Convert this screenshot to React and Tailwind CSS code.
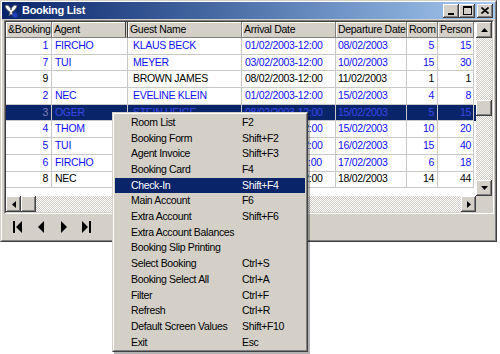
import React from 'react';

const raised =
  'bg-[#d4d0c8] shadow-[inset_-1px_-1px_0_#404040,inset_1px_1px_0_#ffffff,inset_-2px_-2px_0_#808080]';
const checker =
  'bg-[repeating-conic-gradient(#d4d0c8_0_25%,#ffffff_0_50%)] bg-[length:2px_2px]';

const cols = [
  { key: 'id', label: '&Booking', w: 'w-[46px]', cell: 'justify-end pr-[3px]' },
  { key: 'agent', label: 'Agent', w: 'w-[76px]', cell: 'pl-[3px]' },
  { key: 'guest', label: 'Guest Name', w: 'w-[114px]', cell: 'pl-[5px]' },
  { key: 'arr', label: 'Arrival Date', w: 'w-[94px]', cell: 'pl-[3px]' },
  { key: 'dep', label: 'Departure Date', w: 'w-[71px]', cell: 'pl-[2px]' },
  { key: 'room', label: 'Room', w: 'w-[31px]', cell: 'justify-end pr-[3px]' },
  { key: 'person', label: 'Person', w: 'w-[36px]', cell: 'justify-end pr-[2px]' },
];

// guest names under the popup menu can't be read in the screenshot
const rows = [
  { id: 1, agent: 'FIRCHO', guest: 'KLAUS BECK', arr: '01/02/2003-12:00', dep: '08/02/2003', room: 5, person: 15, tone: 'blue' },
  { id: 7, agent: 'TUI', guest: 'MEYER', arr: '03/02/2003-12:00', dep: '10/02/2003', room: 15, person: 30, tone: 'blue' },
  { id: 9, agent: '', guest: 'BROWN JAMES', arr: '08/02/2003-12:00', dep: '11/02/2003', room: 1, person: 1, tone: 'black' },
  { id: 2, agent: 'NEC', guest: 'EVELINE KLEIN', arr: '01/02/2003-12:00', dep: '15/02/2003', room: 4, person: 8, tone: 'blue' },
  { id: 3, agent: 'OGER', guest: 'STEIN HEIGE', arr: '08/02/2003-12:00', dep: '15/02/2003', room: 5, person: 15, tone: 'selected' },
  { id: 4, agent: 'THOM', guest: '', arr: '09/02/2003-12:00', dep: '15/02/2003', room: 10, person: 20, tone: 'blue' },
  { id: 5, agent: 'TUI', guest: '', arr: '10/02/2003-12:00', dep: '16/02/2003', room: 15, person: 40, tone: 'blue' },
  { id: 6, agent: 'FIRCHO', guest: '', arr: '11/02/2003-12:00', dep: '17/02/2003', room: 6, person: 18, tone: 'blue' },
  { id: 8, agent: 'NEC', guest: '', arr: '12/02/2003-12:00', dep: '18/02/2003', room: 14, person: 44, tone: 'black' },
];

const menu = [
  ['Room List', 'F2'],
  ['Booking Form', 'Shift+F2'],
  ['Agent Invoice', 'Shift+F3'],
  ['Booking Card', 'F4'],
  ['Check-In', 'Shift+F4'],
  ['Main Account', 'F6'],
  ['Extra Account', 'Shift+F6'],
  ['Extra Account Balances', ''],
  ['Booking Slip Printing', ''],
  ['Select Booking', 'Ctrl+S'],
  ['Booking Select All', 'Ctrl+A'],
  ['Filter', 'Ctrl+F'],
  ['Refresh', 'Ctrl+R'],
  ['Default Screen Values', 'Shift+F10'],
  ['Exit', 'Esc'],
];

function Tri({ dir }) {
  const vertical = dir === 'up' || dir === 'down';
  const w = vertical ? 7 : 4;
  const h = vertical ? 4 : 7;
  const pts = {
    up: '0,4 3.5,0 7,4',
    down: '0,0 7,0 3.5,4',
    left: '4,0 4,7 0,3.5',
    right: '0,0 0,7 4,3.5',
  };
  return (
    <svg width={w} height={h} viewBox={`0 0 ${w} ${h}`}>
      <polygon points={pts[dir]} fill="#000" />
    </svg>
  );
}

function NavGlyph({ kind }) {
  if (kind === 'first')
    return (
      <svg width="9" height="12" viewBox="0 0 9 12">
        <rect x="0" y="0" width="2" height="12" fill="#000" />
        <polygon points="9,0 9,12 3,6" fill="#000" />
      </svg>
    );
  if (kind === 'prior')
    return (
      <svg width="6" height="12" viewBox="0 0 6 12">
        <polygon points="6,0 6,12 0,6" fill="#000" />
      </svg>
    );
  if (kind === 'next')
    return (
      <svg width="6" height="12" viewBox="0 0 6 12">
        <polygon points="0,0 0,12 6,6" fill="#000" />
      </svg>
    );
  return (
    <svg width="9" height="12" viewBox="0 0 9 12">
      <polygon points="0,0 0,12 6,6" fill="#000" />
      <rect x="7" y="0" width="2" height="12" fill="#000" />
    </svg>
  );
}

function TitleButton({ children, className = '' }) {
  return (
    <div className={`${raised} w-[16px] h-[14px] flex items-center justify-center ${className}`}>
      {children}
    </div>
  );
}

function toneClass(tone) {
  if (tone === 'selected') return 'bg-[#0a246a] text-[#3a46e8]';
  if (tone === 'black') return 'bg-white text-black';
  return 'bg-white text-[#1010ff]';
}

export default function App() {
  return (
    <div className="w-[500px] h-[354px] bg-white relative overflow-hidden font-['Liberation_Sans',Arial,sans-serif]">
      {/* window */}
      <div className="w-[497px] h-[242px] border border-t-[#d4d0c8] border-l-[#d4d0c8] border-r-[#404040] border-b-[#404040]">
        <div className="h-full bg-[#d4d0c8] border border-t-white border-l-white border-r-[#808080] border-b-[#808080] flex flex-col">
          {/* title bar */}
          <div className="h-[17px] bg-gradient-to-r from-[#0a246a] to-[#a6caf0] flex items-center pl-[2px] pr-[2px]">
            <svg width="14" height="14" viewBox="0 0 14 14" className="shrink-0">
              <path d="M1 2 C3 0 6 2 7 6 C8 2 11 0 13 2 C12 5 10 7 8 8 L9 12 L7 10 L5 12 L6 8 C4 7 2 5 1 2 Z" fill="#ffffff" stroke="#606060" strokeWidth="0.8" />
              <circle cx="11" cy="11" r="2.6" fill="#2040c0" />
            </svg>
            <span className="ml-[4px] text-white font-bold text-[11px] tracking-[-0.3px] leading-none">Booking List</span>
            <div className="ml-auto flex items-center">
              <TitleButton>
                <svg width="8" height="8" viewBox="0 0 8 8"><rect x="1" y="6" width="6" height="2" fill="#000" /></svg>
              </TitleButton>
              <TitleButton>
                <svg width="9" height="9" viewBox="0 0 9 9"><rect x="0.5" y="0.5" width="8" height="8" fill="none" stroke="#000" /><rect x="0" y="0" width="9" height="2" fill="#000" /></svg>
              </TitleButton>
              <TitleButton className="ml-[2px]">
                <svg width="8" height="7" viewBox="0 0 8 7"><path d="M0.5 0.5 L7.5 6.5 M7.5 0.5 L0.5 6.5" stroke="#000" strokeWidth="1.6" /></svg>
              </TitleButton>
            </div>
          </div>

          {/* grid */}
          <div className="mt-[1px] ml-[2px] mr-[1px] border border-t-[#808080] border-l-[#808080] border-r-white border-b-white">
            <div className="border border-t-[#404040] border-l-[#404040] border-r-[#d4d0c8] border-b-[#d4d0c8] flex flex-col text-[10.5px] tracking-[-0.3px]">
              <div className="flex h-[174px]">
                <div className="flex-1 bg-white">
                  <div className="flex h-[16px]">
                    {cols.map((c) => (
                      <div
                        key={c.key}
                        className={`${c.w} shrink-0 bg-[#d4d0c8] shadow-[inset_1px_1px_0_#ffffff] border-b border-b-[#808080] flex items-center pl-[2px] text-black whitespace-nowrap overflow-hidden ${
                          c.key === 'agent' ? 'border-r-[3px] border-double border-r-[#404040]' : 'border-r border-r-[#808080]'
                        }`}
                      >
                        {c.label}
                      </div>
                    ))}
                  </div>
                  {rows.map((r) => (
                    <div key={r.id} className={`flex h-[16.7px] ${toneClass(r.tone)}`}>
                      {cols.map((c) => (
                        <div
                          key={c.key}
                          className={`${c.w} shrink-0 flex items-center whitespace-nowrap overflow-hidden border-r border-b border-[#c8c8c8] ${c.cell} ${
                            r.tone === 'selected' && c.key === 'id' ? 'text-[#7a80b8]' : ''
                          }`}
                        >
                          {r[c.key]}
                        </div>
                      ))}
                    </div>
                  ))}
                </div>
                {/* vertical scrollbar */}
                <div className={`w-[16px] flex flex-col ${checker}`}>
                  <div className={`${raised} h-[16px] flex items-center justify-center`}><Tri dir="up" /></div>
                  <div className="h-[62px]" />
                  <div className={`${raised} h-[16px]`} />
                  <div className="flex-1" />
                  <div className={`${raised} h-[16px] flex items-center justify-center`}><Tri dir="down" /></div>
                </div>
              </div>
              {/* horizontal scrollbar */}
              <div className="flex h-[16px]">
                <div className={`flex-1 flex ${checker}`}>
                  <div className={`${raised} w-[15px] flex items-center justify-center`}><Tri dir="left" /></div>
                  <div className={`${raised} w-[15px]`} />
                  <div className="flex-1" />
                  <div className={`${raised} w-[15px] flex items-center justify-center`}><Tri dir="right" /></div>
                </div>
                <div className="w-[16px] bg-[#d4d0c8]" />
              </div>
            </div>
          </div>

          {/* navigator */}
          <div className="flex-1 flex items-center pl-[4px]">
            {['first', 'prior', 'next', 'last'].map((k) => (
              <div key={k} className="w-[23px] h-[20px] flex items-center justify-center">
                <NavGlyph kind={k} />
              </div>
            ))}
          </div>
        </div>
      </div>

      {/* context menu */}
      <div className="absolute left-[112px] top-[112px] w-[196px] h-[240px] bg-[#d4d0c8] border border-t-[#d4d0c8] border-l-[#d4d0c8] border-r-[#404040] border-b-[#404040] shadow-[2px_2px_0_rgba(0,0,0,0.3)]">
        <div className="h-full border border-t-white border-l-white border-r-[#808080] border-b-[#808080] p-[1px] text-[10.5px] tracking-[-0.35px] text-black">
          {menu.map(([label, key]) => (
            <div
              key={label}
              className={`flex items-center h-[15.7px] pl-[16px] whitespace-nowrap ${
                label === 'Check-In' ? 'bg-[#0a246a] text-white' : ''
              }`}
            >
              <span className="w-[111px] shrink-0">{label}</span>
              <span>{key}</span>
            </div>
          ))}
        </div>
      </div>
    </div>
  );
}
